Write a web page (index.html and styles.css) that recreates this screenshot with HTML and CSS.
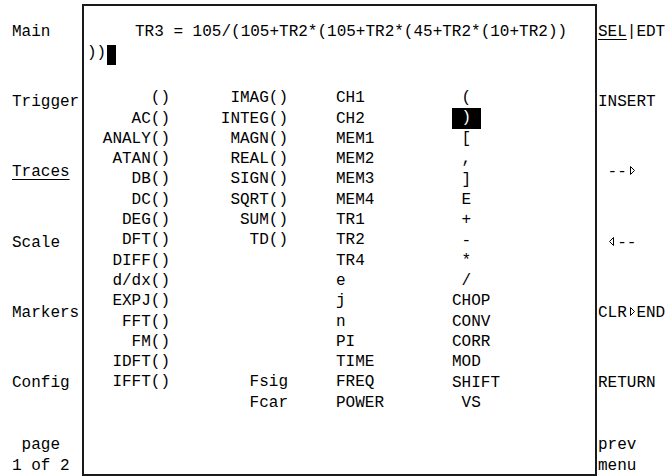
FILE: index.html
```html
<!DOCTYPE html>
<html>
<head>
<meta charset="utf-8">
<link rel="stylesheet" href="styles.css">
</head>
<body>
<div class="screen">
  <nav class="keys keys-left">
    <div class="key">Main</div>
    <div class="key">Trigger</div>
    <div class="key"><span class="sel">Traces</span></div>
    <div class="key">Scale</div>
    <div class="key">Markers</div>
    <div class="key">Config</div>
    <div class="key key-page"> page
1 of 2</div>
  </nav>
  <main class="editor">
    <div class="eq">
      <div class="eq-line">     TR3 = 105/(105+TR2*(105+TR2*(45+TR2*(10+TR2))</div>
      <div class="eq-line">))<span class="cursor"></span></div>
    </div>
    <div class="list">
      <div class="col col-fn">()
AC()
ANALY()
ATAN()
DB()
DC()
DEG()
DFT()
DIFF()
d/dx()
EXPJ()
FFT()
FM()
IDFT()
IFFT()</div>
      <div class="col col-fn2">IMAG()
INTEG()
MAGN()
REAL()
SIGN()
SQRT()
SUM()
TD()






Fsig
Fcar</div>
      <div class="col col-var">CH1
CH2
MEM1
MEM2
MEM3
MEM4
TR1
TR2
TR4
e
j
n
PI
TIME
FREQ
POWER</div>
      <div class="col col-op"> (
<span class="hl"> ) </span>
 [
 ,
 ]
 E
 +
 -
 *
 /
CHOP
CONV
CORR
MOD
SHIFT
 VS</div>
    </div>
  </main>
  <nav class="keys keys-right">
    <div class="key"><span class="sel">SEL</span>|EDT</div>
    <div class="key">INSERT</div>
    <div class="key"> --<span class="arrow"><svg width="8" height="11" viewBox="0 0 8 11"><path d="M2.5 1.5V9.5M2.5 1.5L6.5 5.5L2.5 9.5" fill="none" stroke="#000" stroke-width="1"/></svg></span></div>
    <div class="key"> <span class="arrow"><svg width="8" height="11" viewBox="0 0 8 11"><path d="M5.5 1.5V9.5M5.5 1.5L1.5 5.5L5.5 9.5" fill="none" stroke="#000" stroke-width="1"/></svg></span>--</div>
    <div class="key">CLR<span class="arrow"><svg width="8" height="11" viewBox="0 0 8 11"><path d="M2.5 1.5V9.5M2.5 1.5L6.5 5.5L2.5 9.5" fill="none" stroke="#000" stroke-width="1"/></svg></span>END</div>
    <div class="key">RETURN</div>
    <div class="key key-page">prev
menu</div>
  </nav>
</div>
</body>
</html>
```
FILE: styles.css
```css
html, body {
  margin: 0;
  padding: 0;
  background: #fff;
}

body {
  font-family: "Liberation Mono", "DejaVu Sans Mono", monospace;
  font-size: 16px;
  line-height: 20.3px;
  color: #000;
}

.screen {
  display: flex;
  width: 667px;
  height: 476px;
  overflow: hidden;
}

.keys {
  display: flex;
  flex-direction: column;
  box-sizing: border-box;
  height: 476px;
  padding-top: 22px;
}

.keys-left {
  width: 82px;
  padding-left: 12px;
}

.keys-right {
  width: 70px;
  padding-left: 1px;
}

.key {
  height: 20.3px;
  white-space: pre;
}

.key + .key {
  margin-top: 49.9px;
}

.keys .key-page {
  margin-top: auto;
  height: 40.6px;
}

.sel {
  text-decoration: underline;
  text-decoration-thickness: 1px;
  text-underline-offset: 3px;
}

.arrow {
  display: inline-block;
  width: 1ch;
  text-align: center;
}

.arrow svg {
  display: inline-block;
  vertical-align: baseline;
}

.editor {
  box-sizing: border-box;
  width: 515px;
  height: 472px;
  margin-top: 4px;
  border: 2px solid #1a1a1a;
  padding: 16.3px 0 0 3px;
}

.eq-line {
  height: 20.3px;
  white-space: pre;
}

.cursor {
  display: inline-block;
  width: 9px;
  height: 20px;
  margin-left: 0.5px;
  background: #000;
  vertical-align: -8.7px;
}

.list {
  display: flex;
  margin-top: 25.4px;
}

.col {
  white-space: pre;
}

.col-fn {
  width: 83px;
  text-align: right;
}

.col-fn2 {
  width: 118px;
  text-align: right;
}

.col-var {
  width: 116px;
  padding-left: 48px;
}

.hl {
  display: inline-block;
  height: 21px;
  vertical-align: top;
  margin-top: -0.5px;
  background: #000;
  color: #fff;
}
```
